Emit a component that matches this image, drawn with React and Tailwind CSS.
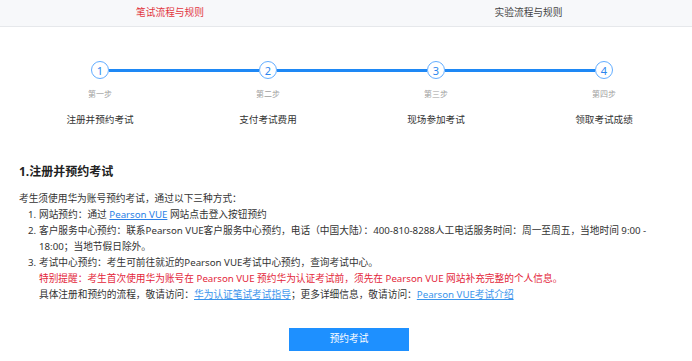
import React from "react";

const steps = [
  { n: 1, sub: "第一步", label: "注册并预约考试" },
  { n: 2, sub: "第二步", label: "支付考试费用" },
  { n: 3, sub: "第三步", label: "现场参加考试" },
  { n: 4, sub: "第四步", label: "领取考试成绩" },
];

export default function App() {
  return (
    <div
      className="w-[692px] h-[361px] overflow-hidden bg-white text-[#333]"
      style={{ fontFamily: '"Noto Sans", "Noto Sans CJK SC", sans-serif' }}
    >
      {/* Tabs */}
      <div className="flex h-[27px] bg-[#f7f8fa] border-b border-[#e6e8eb]">
        <div className="w-[340px] flex items-center justify-center text-[9.7px] text-[#e2363f]">
          笔试流程与规则
        </div>
        <div className="flex-1 pl-[25px] flex items-center justify-center text-[9.7px] text-[#444]">
          实验流程与规则
        </div>
      </div>

      {/* Steps */}
      <div className="ml-[16px] w-[672px] grid grid-cols-4 mt-[34px]">
        {steps.map((s, i) => (
          <div key={s.n} className="flex flex-col items-center">
            <div className="w-full flex items-center">
              <div className={"flex-1 h-[3px] " + (i === 0 ? "bg-transparent" : "bg-[#1e88f5]")} />
              <div className="w-[18px] h-[18px] rounded-full border border-[#62adff] bg-white flex items-center justify-center text-[11px] leading-none text-[#2b86ee]">
                {s.n}
              </div>
              <div className={"flex-1 h-[3px] " + (i === 3 ? "bg-transparent" : "bg-[#1e88f5]")} />
            </div>
            <div className="mt-[9px] text-[8px] leading-[12px] text-[#a0a0a0]">{s.sub}</div>
            <div className="mt-[13px] text-[9.6px] leading-[14px] text-[#333]">{s.label}</div>
          </div>
        ))}
      </div>

      {/* Content */}
      <div className="pl-[19px] pr-[13px]">
        <div className="mt-[36px] text-[12px] leading-[18px] font-bold text-[#222]">1.注册并预约考试</div>
        <div className="mt-[10px] text-[9.7px] leading-[16px] whitespace-nowrap">
          <div>考生须使用华为账号预约考试，通过以下三种方式：</div>
          <div className="flex">
            <span className="w-[20px] pl-[9px] shrink-0">1.</span>
            <div>
              网站预约：通过 <a className="text-[#2a7fe6] underline">Pearson VUE</a> 网站点击登入按钮预约
            </div>
          </div>
          <div className="flex">
            <span className="w-[20px] pl-[9px] shrink-0">2.</span>
            <div>
              客户服务中心预约：联系Pearson VUE客户服务中心预约，电话（中国大陆）：400-810-8288人工电话服务时间：周一至周五，当地时间 9:00 -
              <br />
              18:00；当地节假日除外。
            </div>
          </div>
          <div className="flex">
            <span className="w-[20px] pl-[9px] shrink-0">3.</span>
            <div>
              考试中心预约：考生可前往就近的Pearson VUE考试中心预约，查询考试中心。
              <br />
              <span className="text-[#e3263a]">
                特别提醒：考生首次使用华为账号在 Pearson VUE 预约华为认证考试前，须先在 Pearson VUE 网站补充完整的个人信息。
              </span>
              <br />
              具体注册和预约的流程，敬请访问：
              <a className="text-[#3a94ec] underline">华为认证笔试考试指导</a>
              ；更多详细信息，敬请访问：
              <a className="text-[#3a94ec] underline">Pearson VUE考试介绍</a>
            </div>
          </div>
        </div>
        <div className="mt-[25px] flex justify-center">
          <button className="w-[120px] h-[23px] bg-[#1e90ff] text-white text-[9.7px] flex items-center justify-center">
            预约考试
          </button>
        </div>
      </div>
    </div>
  );
}
